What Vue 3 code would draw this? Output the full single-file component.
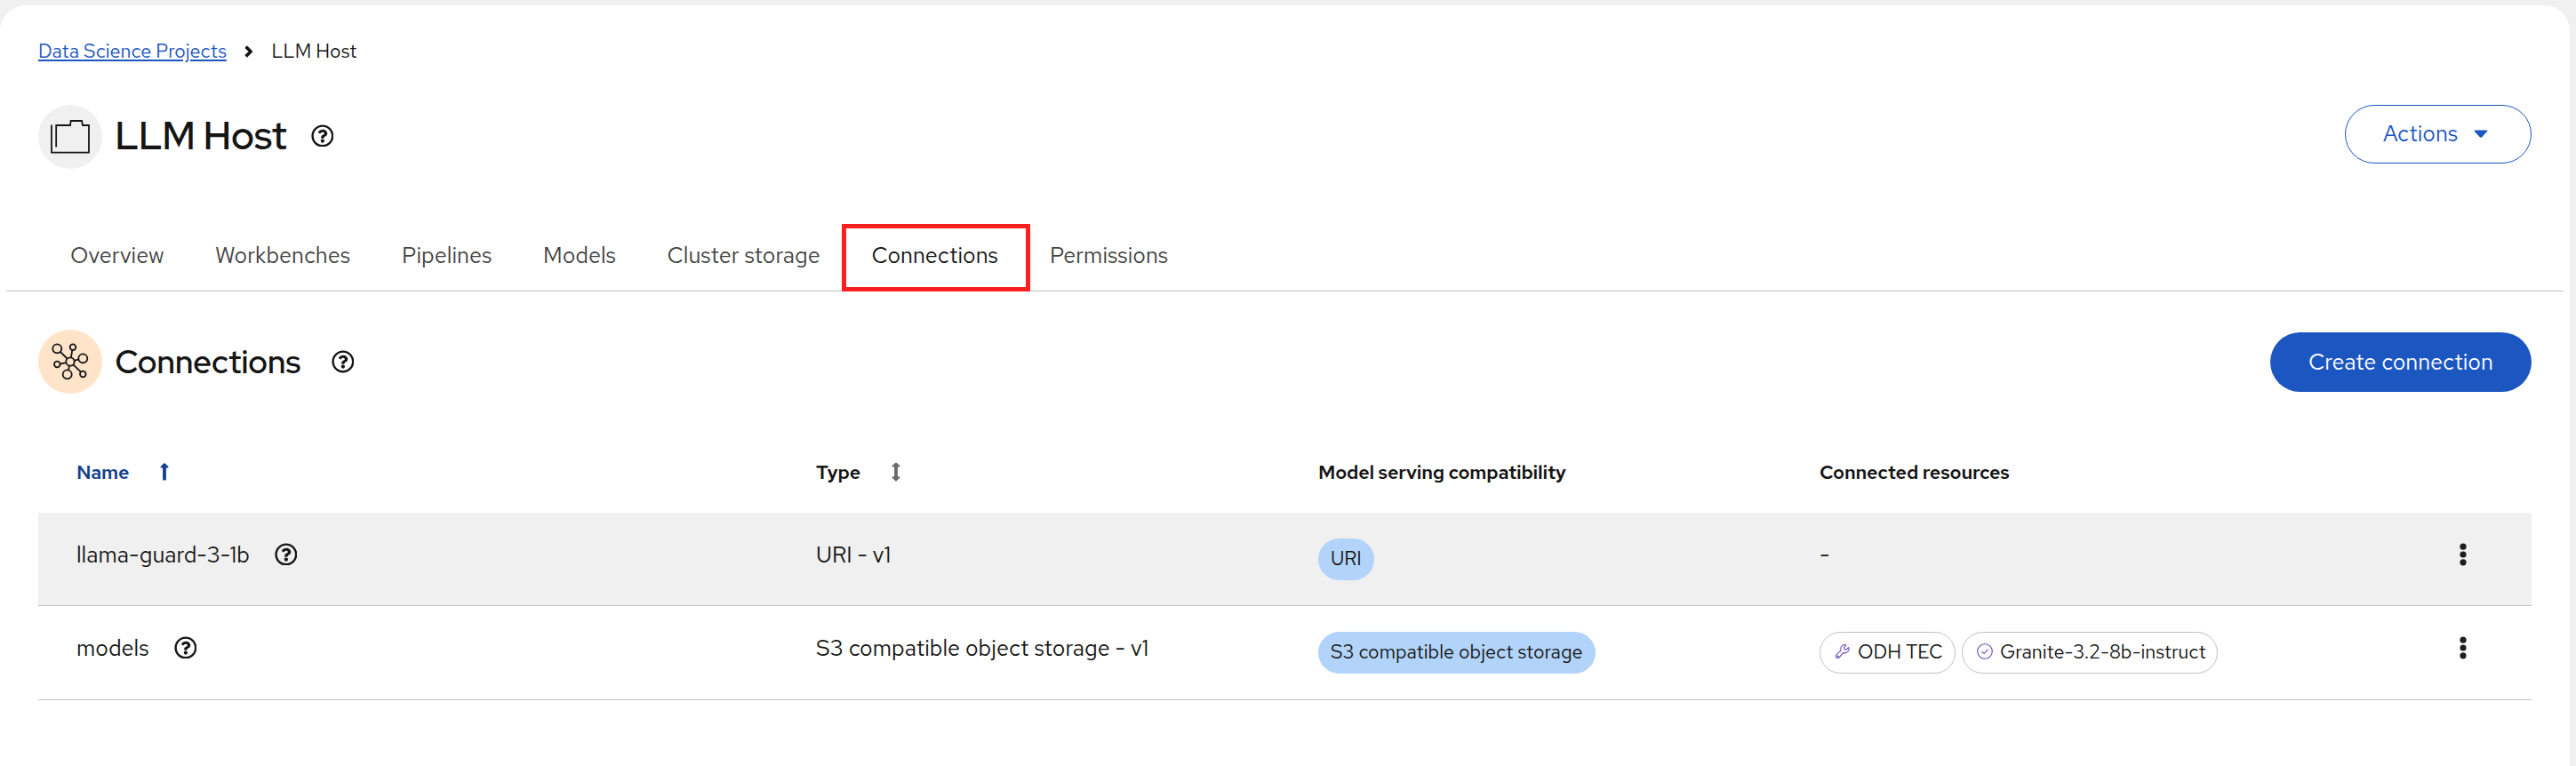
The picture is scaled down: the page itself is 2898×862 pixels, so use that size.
<script setup>
import { h } from 'vue'

const HelpIcon = () =>
  h('svg', { viewBox: '0 0 512 512', width: 25.8, height: 25.8, fill: '#151515', style: 'display:block;flex:none' }, [
    h('path', {
      d: 'M256 8C119.043 8 8 119.083 8 256c0 136.997 111.043 248 248 248s248-111.003 248-248C504 119.083 392.957 8 256 8zm0 448c-110.532 0-200-89.431-200-200 0-110.495 89.472-200 200-200 110.491 0 200 89.471 200 200 0 110.53-89.431 200-200 200zm107.244-255.2c0 67.052-72.421 68.084-72.421 92.863V300c0 6.627-5.373 12-12 12h-45.647c-6.627 0-12-5.373-12-12v-8.659c0-35.745 27.1-50.034 47.579-61.516 17.561-9.845 28.324-16.541 28.324-29.579 0-17.246-21.999-28.693-39.784-28.693-23.189 0-33.894 10.977-48.942 29.969-4.057 5.12-11.46 6.071-16.666 2.124l-27.824-21.098c-5.107-3.872-6.251-11.066-2.644-16.363C184.846 131.491 214.94 112 261.794 112c49.071 0 101.45 38.304 101.45 88.8zM298 368c0 23.159-18.841 42-42 42s-42-18.841-42-42 18.841-42 42-42 42 18.841 42 42z'
    })
  ])

const tabs = [
  { label: 'Overview', width: 163 },
  { label: 'Workbenches', width: 210 },
  { label: 'Pipelines', width: 159 },
  { label: 'Models', width: 139.5 },
  { label: 'Cluster storage', width: 230 },
  { label: 'Connections', width: 200.5, active: true },
  { label: 'Permissions', width: 135 }
]

const rows = [
  {
    name: 'llama-guard-3-1b', nameWidth: 222.5,
    type: 'URI - v1',
    compat: 'URI', compatWidth: 63,
    resources: []
  },
  {
    name: 'models', nameWidth: 109.5,
    type: 'S3 compatible object storage - v1',
    compat: 'S3 compatible object storage', compatWidth: 312,
    resources: [
      { label: 'ODH TEC', icon: 'wrench', width: 153 },
      { label: 'Granite-3.2-8b-instruct', icon: 'check', width: 288 }
    ]
  }
]
</script>

<template>
  <main class="page">
    <nav class="crumbs">
      <a class="crumb-link">Data Science Projects</a>
      <svg class="chevron" width="12" height="16" viewBox="0 0 12 16"><path d="M2.6 2.6L8.2 8L2.6 13.4" /></svg>
      <span class="crumb-current">LLM Host</span>
    </nav>

    <header class="bar title-bar">
      <span class="disc disc-grey">
        <svg width="72" height="72" viewBox="0 0 72 72">
          <path d="M15 22.5V53.6H57V23H50L49 18H36.7L36 23H20.2V47.5" />
        </svg>
      </span>
      <h1 class="title">LLM Host</h1>
      <HelpIcon class="title-help" />
      <button class="btn btn-outline">
        <span>Actions</span>
        <svg width="16" height="10" viewBox="0 0 16 10"><path d="M1.3 .5H14.7Q15.8 1 15 1.9L9.3 8.2Q8 9.4 6.7 8.2L1 1.9Q.2 1 1.3 .5Z" fill="#1c56c0" /></svg>
      </button>
    </header>

    <nav class="tabs">
      <span
        v-for="tab in tabs"
        :key="tab.label"
        class="tab"
        :class="{ active: tab.active }"
        :style="{ width: tab.width + 'px' }"
      >{{ tab.label }}</span>
    </nav>

    <header class="bar section-bar">
      <span class="disc disc-peach">
        <svg width="72" height="72" viewBox="0 0 72 72">
          <path d="M24.8 24.8L32.6 32.5M38.3 22.8L36.9 31.4M45.4 33.4L40.6 34.8M24.5 38.5L31.4 37.1M34 45.5L35 40.6M48 47.6L39.4 39.4" />
          <circle cx="36" cy="36" r="4.7" />
          <circle cx="21.3" cy="21.3" r="5" />
          <circle cx="39" cy="19.7" r="3.3" />
          <circle cx="50.3" cy="32.3" r="5" />
          <circle cx="21.3" cy="39" r="3.3" />
          <circle cx="32.7" cy="50.3" r="5" />
          <circle cx="50.3" cy="50" r="3.3" />
        </svg>
      </span>
      <h2 class="section-title">Connections</h2>
      <HelpIcon class="section-help" />
      <button class="btn btn-primary">Create connection</button>
    </header>

    <section class="table">
      <div class="row head">
        <div class="cell sorted">
          <span class="th-name">Name</span>
          <svg width="12" height="22" viewBox="0 0 12 22"><path d="M6 1.2Q6.7 1.2 7.2 1.8L10.4 5.2Q10.9 6.6 9.6 6.6H7.9V19.2Q7.9 20.4 6.9 20.4H5.1Q4.1 20.4 4.1 19.2V6.6H2.4Q1.1 6.6 1.6 5.2L4.8 1.8Q5.3 1.2 6 1.2Z" fill="#14418c" /></svg>
        </div>
        <div class="cell">
          <span class="th-type">Type</span>
          <svg width="12" height="22" viewBox="0 0 12 22"><path d="M6 .6Q6.6 .6 7.2 1.2L10.4 4.2Q10.9 5.6 9.6 5.6H7.9V16.2H9.6Q10.9 16.2 10.4 17.6L7.2 20.8Q6.6 21.4 6 21.4Q5.4 21.4 4.8 20.8L1.6 17.6Q1.1 16.2 2.4 16.2H4.1V5.6H2.4Q1.1 5.6 1.6 4.2L4.8 1.2Q5.4 .6 6 .6Z" fill="#6a6a6a" /></svg>
        </div>
        <div class="cell">Model serving compatibility</div>
        <div class="cell">Connected resources</div>
      </div>

      <div v-for="(row, i) in rows" :key="row.name" class="row body" :class="{ striped: i === 0 }">
        <div class="cell">
          <span class="name" :style="{ width: row.nameWidth + 'px' }">{{ row.name }}</span>
          <HelpIcon />
        </div>
        <div class="cell">{{ row.type }}</div>
        <div class="cell">
          <span class="pill filled" :style="{ width: row.compatWidth + 'px' }">{{ row.compat }}</span>
        </div>
        <div class="cell resources">
          <span v-if="!row.resources.length">-</span>
          <span
            v-for="res in row.resources"
            :key="res.label"
            class="pill outlined"
            :style="{ width: res.width + 'px' }"
          >
            <svg v-if="res.icon === 'wrench'" width="18" height="18" viewBox="0 0 18 18">
              <path d="M1.7 13.2L6.8 8C5.9 4.2 8.6 1.3 12.1 1.5L12.8 2.1L10.5 4.6L11 6.7L13 7.1L15.4 4.7L16.1 5.2C16.5 9 13.2 11.5 9.9 10.7L4.6 16.2C2.3 17.2 .6 15.3 1.7 13.2Z" />
              <circle cx="3.6" cy="14.6" r=".5" />
            </svg>
            <svg v-else width="18" height="18" viewBox="0 0 18 18">
              <circle cx="9" cy="9" r="8.3" />
              <path d="M5.4 9.1L8 11.6L12.5 6.9" />
            </svg>
            <span>{{ res.label }}</span>
          </span>
        </div>
        <svg class="kebab" width="8" height="26" viewBox="0 0 8 26">
          <circle cx="4" cy="4.2" r="3.6" /><circle cx="4" cy="13" r="3.6" /><circle cx="4" cy="21.8" r="3.6" />
        </svg>
      </div>
    </section>
  </main>
</template>

<style>
html, body { margin: 0; height: 100%; background: #f0f0f0; overflow: hidden; }
#app { display: flow-root; }
</style>

<style scoped>
.page {
  box-sizing: border-box;
  width: 2891px;
  height: 856px;
  margin-top: 6px;
  padding: 31px 0 0;
  background: #fff;
  border-radius: 29px 29px 0 0;
  color: #151515;
  font: 400 25.2px/36px "Red Hat Text", Lato, "Open Sans", sans-serif;
}
.crumbs { display: flex; align-items: center; height: 41px; padding-left: 43px; font-size: 21.6px; line-height: 41px; }
.crumb-link { width: 212px; color: #1c56c0; text-decoration: underline; text-decoration-thickness: 2px; text-underline-offset: 2px; white-space: nowrap; }
.chevron { margin: 0 19.5px 0 19px; fill: none; stroke: #151515; stroke-width: 3.6; stroke-linejoin: round; }

.bar { display: flex; align-items: flex-start; height: 72px; margin: 0 43px; }
.title-bar { margin-top: 40px; }
.section-bar { margin-top: 43px; }
.disc { width: 72px; height: 72px; border-radius: 50%; flex: none; }
.disc svg { display: block; fill: none; stroke: #151515; stroke-width: 1.8; }
.disc-grey { background: #f0f0f0; }
.disc-peach { background: #ffe4c9; }
.title, .section-title { margin: 0 0 0 14.4px; font-family: "Red Hat Display", "Red Hat Text", Lato, sans-serif; font-weight: 600; white-space: nowrap; }
.title { width: 220.2px; font-size: 43.2px; line-height: 69px; }
.section-title { width: 243.3px; font-size: 36px; line-height: 72px; }
.title-help { margin-top: 21.6px; }
.section-help { margin-top: 22.8px; }

.btn { box-sizing: border-box; margin: 0 0 0 auto; border: 0; border-radius: 34px; padding: 0 0 2px 43px; display: flex; align-items: center; font: inherit; white-space: nowrap; }
.btn-outline { width: 210px; height: 66px; border: 1px solid #1c56c0; padding-left: 42px; background: #fff; color: #1c56c0; }
.btn-outline svg { margin: 1px 0 0 18px; }
.btn-primary { width: 294px; height: 67px; margin-top: 3px; background: #1c56c0; color: #fff; }

.tabs { box-sizing: border-box; display: flex; height: 138px; margin: 0 7px; padding: 79px 0 0 72px; border-bottom: 1px solid #c0c0c0; }
.tab { position: relative; flex: none; color: #444; white-space: nowrap; }
.tab.active { color: #151515; }
.tab.active::after { content: ""; position: absolute; left: -33.5px; top: -17px; width: 202px; height: 66px; border: 5px solid #ff1f1f; }

.table { margin: 0 43px; }
.row { box-sizing: border-box; display: grid; grid-template-columns: 832px 565px 564px 716px 1fr; padding-left: 43px; }
.cell { display: flex; align-items: center; height: 37px; white-space: nowrap; }
.head { height: 134px; padding-top: 70px; font-size: 21.6px; font-weight: 600; letter-spacing: -.2px; }
.head svg { margin-top: -2px; }
.sorted { color: #14418c; }
.th-name { width: 93px; }
.th-type { width: 84px; }
.body { height: 106px; padding-top: 28px; border-bottom: 1px solid #c0c0c0; }
.body.striped { height: 105px; background: #f0f0f0; }
.pill { box-sizing: border-box; display: flex; align-items: center; height: 46.5px; margin-top: 12px; padding: 0 0 2px 14px; border-radius: 24px; font-size: 21.6px; }
.filled { background: #b2d4fa; }
.outlined { padding-left: 16px; border: 1px solid #c0c0c0; background: #fff; }
.outlined svg { flex: none; margin: -2px 8px 0 0; fill: none; stroke: #6542be; stroke-width: 1.05; }
.resources { gap: 7px; }
.kebab { margin: 5.5px 0 0 4px; fill: #1f1f1f; }
</style>
